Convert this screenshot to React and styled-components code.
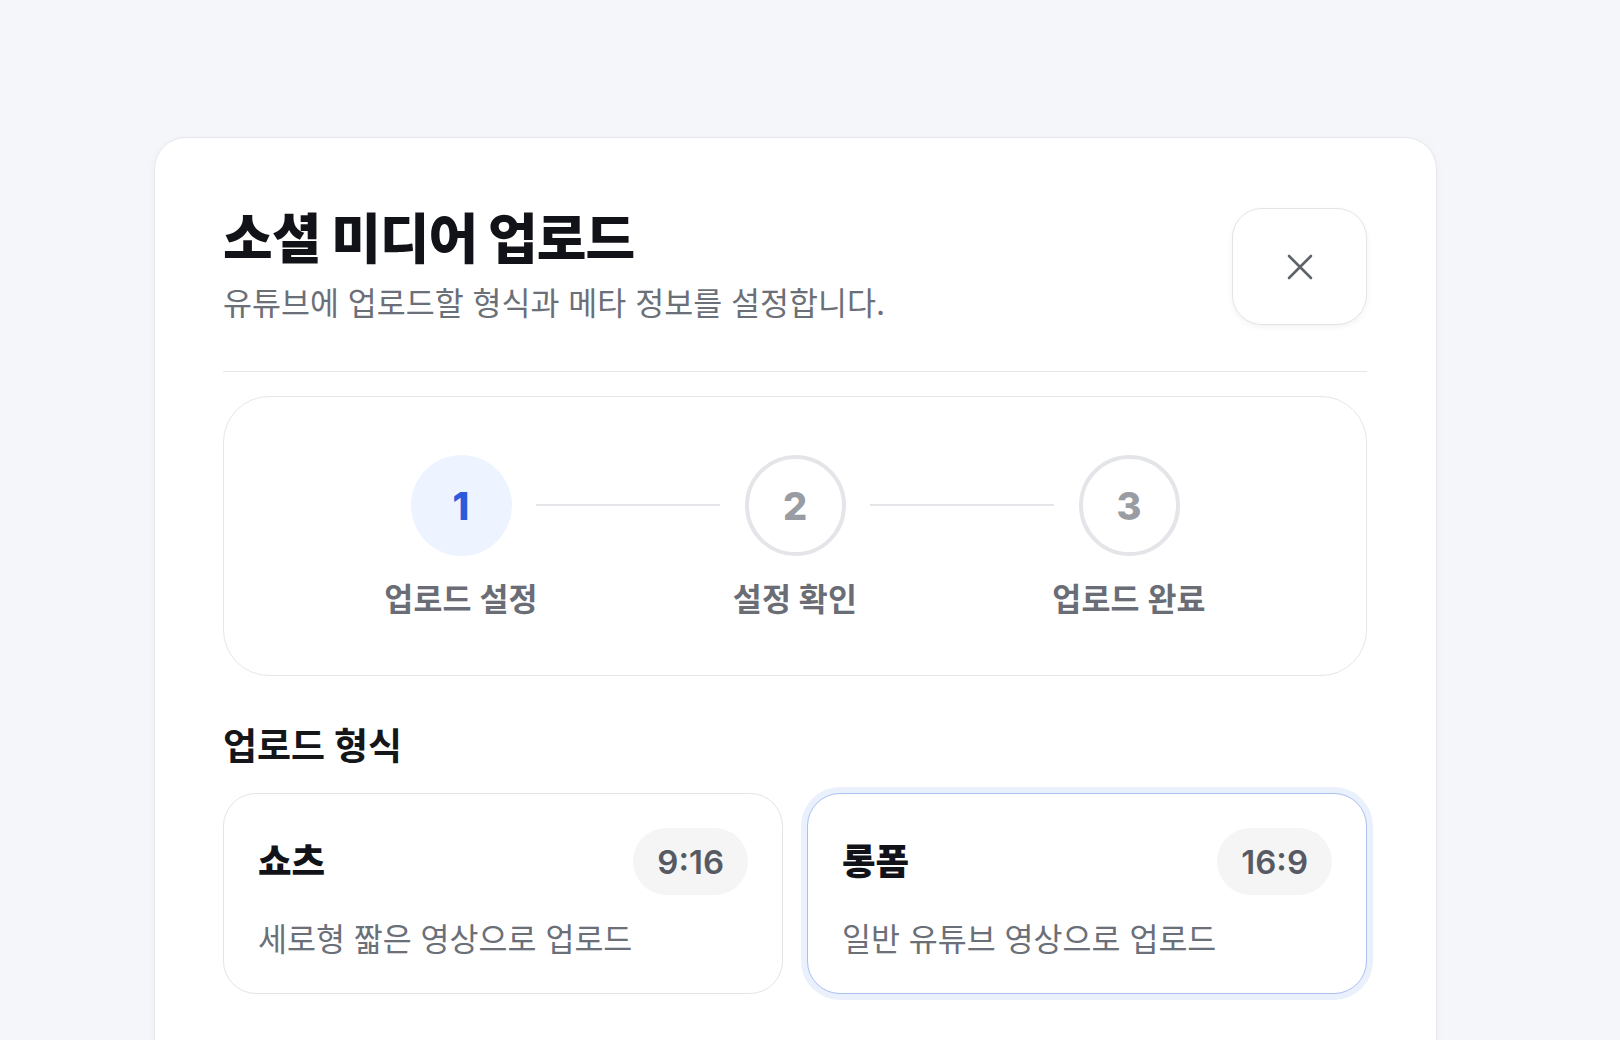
import React from "react";
import styled, { createGlobalStyle } from "styled-components";

const Global = createGlobalStyle`
  html, body { margin: 0; padding: 0; }
  body {
    background: #f5f6f9;
    font-family: "Inter", "Noto Sans CJK KR", "Noto Sans", sans-serif;
    color: #111318;
    -webkit-font-smoothing: antialiased;
  }
  * { box-sizing: border-box; }
`;

const Page = styled.div`
  padding: 137px 0 0 154px;
  min-height: 1040px;
`;

const Modal = styled.section`
  width: 1283px;
  background: #ffffff;
  border: 1px solid #e6e7eb;
  border-radius: 32px;
  padding: 70px 69px 90px 68px;
  box-shadow: 0 2px 10px rgba(20, 24, 40, 0.03);
`;

const Header = styled.header`
  display: flex;
  justify-content: space-between;
  align-items: flex-start;
  padding-bottom: 46px;
  border-bottom: 1px solid #e5e7eb;
`;

const TitleBlock = styled.div`
  display: flex;
  flex-direction: column;
`;

const Title = styled.h1`
  margin: 0;
  font-size: 54px;
  line-height: 64px;
  font-weight: 800;
  letter-spacing: -1px;
  color: #121318;
`;

const Subtitle = styled.p`
  margin: 12px 0 0;
  font-size: 31.5px;
  line-height: 40px;
  font-weight: 400;
  color: #6b6f78;
`;

const CloseButton = styled.button`
  width: 135px;
  height: 117px;
  border-radius: 30px;
  border: 1px solid #e3e4e8;
  background: #fff;
  display: flex;
  align-items: center;
  justify-content: center;
  box-shadow: 0 2px 6px rgba(20, 24, 40, 0.05);
  color: #5f636b;
  cursor: pointer;
  padding: 0;
`;

const StepperBox = styled.div`
  margin-top: 24px;
  border: 1px solid #e5e6ea;
  border-radius: 46px;
  padding: 58px 0 57px;
  display: flex;
  justify-content: center;
  align-items: flex-start;
`;

const Step = styled.div`
  width: 100px;
  display: flex;
  flex-direction: column;
  align-items: center;
`;

const Circle = styled.div`
  width: 101px;
  height: 101px;
  border-radius: 50%;
  display: flex;
  align-items: center;
  justify-content: center;
  font-family: "Inter", sans-serif;
  font-weight: 800;
  font-size: 38px;
  background: ${(p) => (p.$active ? "#edf3ff" : "#ffffff")};
  border: ${(p) => (p.$active ? "none" : "4px solid #e4e5e8")};
  color: ${(p) => (p.$active ? "#2c5bd9" : "#9a9ca3")};
`;

const StepLabel = styled.div`
  margin-top: 26px;
  white-space: nowrap;
  font-size: 31.5px;
  line-height: 36px;
  font-weight: 700;
  color: #6a6d75;
  letter-spacing: 0.2px;
`;

const Connector = styled.div`
  width: 184px;
  height: 2px;
  margin: 49px 25px 0;
  background: #e4e5e8;
`;

const SectionTitle = styled.h2`
  margin: 48px 0 0;
  font-size: 37px;
  line-height: 46px;
  font-weight: 700;
  color: #15161a;
`;

const Options = styled.div`
  margin-top: 23px;
  display: grid;
  grid-template-columns: 1fr 1fr;
  gap: 24px;
`;

const OptionCard = styled.div`
  height: 201px;
  border-radius: 33px;
  background: #fff;
  border: 1.5px solid ${(p) => (p.$selected ? "#a9c1f3" : "#e3e4e8")};
  box-shadow: ${(p) => (p.$selected ? "0 0 0 6px #eaf0fc" : "none")};
  padding: 34px 34px 0 34px;
  display: flex;
  flex-direction: column;
`;

const OptionTop = styled.div`
  display: flex;
  justify-content: space-between;
  align-items: center;
`;

const OptionName = styled.div`
  font-size: 36.5px;
  line-height: 44px;
  font-weight: 800;
  color: #121318;
`;

const RatioBadge = styled.div`
  height: 67px;
  padding: 0 24px;
  border-radius: 34px;
  background: #f5f5f6;
  display: flex;
  align-items: center;
  font-family: "Inter", sans-serif;
  font-size: 33px;
  font-weight: 600;
  color: #575a62;
`;

const OptionDesc = styled.div`
  margin-top: 25px;
  font-size: 31.5px;
  line-height: 40px;
  color: #6b6f78;
`;

const steps = [
  { n: 1, label: "업로드 설정" },
  { n: 2, label: "설정 확인" },
  { n: 3, label: "업로드 완료" },
];

const options = [
  { name: "쇼츠", ratio: "9:16", desc: "세로형 짧은 영상으로 업로드" },
  { name: "롱폼", ratio: "16:9", desc: "일반 유튜브 영상으로 업로드", selected: true },
];

export default function App() {
  return (
    <>
      <Global />
      <Page>
        <Modal>
          <Header>
            <TitleBlock>
              <Title>소셜 미디어 업로드</Title>
              <Subtitle>유튜브에 업로드할 형식과 메타 정보를 설정합니다.</Subtitle>
            </TitleBlock>
            <CloseButton aria-label="닫기">
              <svg width="28" height="28" viewBox="0 0 28 28" fill="none">
                <path d="M3 3L25 25M25 3L3 25" stroke="currentColor" strokeWidth="2.6" strokeLinecap="round" />
              </svg>
            </CloseButton>
          </Header>

          <StepperBox>
            {steps.map((s, i) => (
              <React.Fragment key={s.n}>
                {i > 0 && <Connector />}
                <Step>
                  <Circle $active={i === 0}>{s.n}</Circle>
                  <StepLabel>{s.label}</StepLabel>
                </Step>
              </React.Fragment>
            ))}
          </StepperBox>

          <SectionTitle>업로드 형식</SectionTitle>
          <Options>
            {options.map((o) => (
              <OptionCard key={o.name} $selected={o.selected}>
                <OptionTop>
                  <OptionName>{o.name}</OptionName>
                  <RatioBadge>{o.ratio}</RatioBadge>
                </OptionTop>
                <OptionDesc>{o.desc}</OptionDesc>
              </OptionCard>
            ))}
          </Options>
        </Modal>
      </Page>
    </>
  );
}
